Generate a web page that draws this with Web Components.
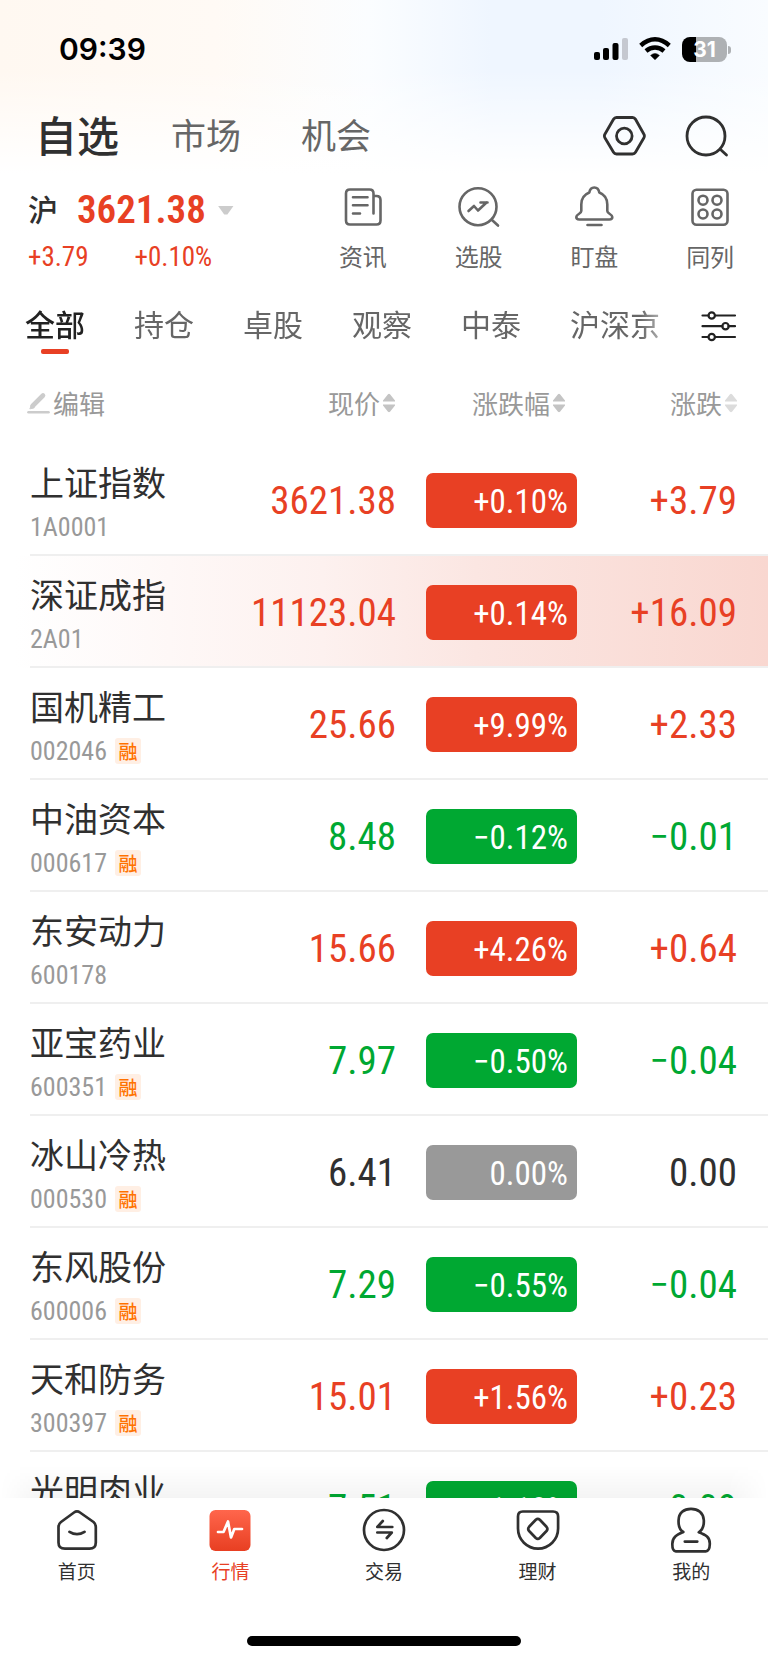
<!DOCTYPE html>
<html lang="zh-CN">
<head>
<meta charset="utf-8">
<meta name="viewport" content="width=device-width, initial-scale=1">
<title>自选行情</title>
<style>
  html, body { margin: 0; height: 100%; }
  body {
    --cjk: "Noto Sans CJK SC", sans-serif;
    --num: "Roboto Condensed", Roboto, "Noto Sans CJK SC", sans-serif;
    --up: #e84024;
    --down: #00a832;
    --flat: #303030;
    font-family: var(--cjk);
    color: #303030;
    background: #fff;
  }
</style>
</head>
<body>
<quote-app></quote-app>
<script>
const RESET = `
  *, *::before, *::after { box-sizing: border-box; }
  button { font: inherit; color: inherit; background: none; border: 0; padding: 0; margin: 0; cursor: pointer; }
  a { color: inherit; text-decoration: none; }
  svg { display: block; fill: none; stroke: currentColor; stroke-linecap: round; stroke-linejoin: round; }
`;

function define(name, html) {
  customElements.define(name, class extends HTMLElement {
    constructor() {
      super();
      this.attachShadow({ mode: 'open' }).innerHTML = `<style>${RESET}</style>` + html;
    }
  });
}

/* ---------- status bar ---------- */
define('status-bar', `
<style>
  :host { display: flex; justify-content: space-between; align-items: center; height: 98px; padding: 0 37px 0 59px; color: #000; }
  time { font: 600 30px/36px Inter, sans-serif; }
  .right { display: flex; align-items: center; gap: 11px; }
  .battery { position: relative; width: 45px; height: 25px; border-radius: 8px; margin-right: 4px;
    background: linear-gradient(90deg, #000 32%, #aeb1b4 32%); color: #fff; text-align: center; font: 700 21px/25px Inter, sans-serif; }
  .battery::after { content: ""; position: absolute; left: 46px; top: 9px; width: 3px; height: 8px; border-radius: 0 4px 4px 0; background: #aeb1b4; }
</style>
<time>09:39</time>
<div class="right">
  <svg width="34" height="24" viewBox="0 0 34 24" aria-hidden="true" style="stroke:none">
    <rect x="0" y="15" width="6" height="8" rx="2" fill="#000"/><rect x="9" y="11" width="6" height="12" rx="2" fill="#000"/>
    <rect x="18.500" y="6" width="6" height="17" rx="2" fill="#000"/><rect x="28" y="1" width="6" height="22" rx="2" fill="#c5c8d0"/>
  </svg>
  <svg width="32" height="24" viewBox="0 0 32 24" aria-hidden="true" style="stroke-width:4.4;stroke-linecap:butt">
    <path d="M1.700 8.500 Q8.500 2.300 16 2.300 T30.300 8.500"/><path d="M7 14 Q11 10.500 16 10.500 T25 14"/>
    <path d="M16 22.800 L11.600 18.400 Q16 14.600 20.400 18.400 Z" style="fill:#000;stroke-width:.5"/>
  </svg>
  <div class="battery">31</div>
</div>`);

/* ---------- top navigation ---------- */
define('top-nav', `
<style>
  :host { display: flex; justify-content: space-between; align-items: center; height: 76px; padding: 0 39px 0 35px; }
  nav { display: flex; align-items: center; gap: 52px; padding-bottom: 4px; }
  nav a { font-size: 35px; line-height: 52px; color: #666; }
  nav a[aria-current] { font-size: 42px; font-weight: 500; color: #303030; }
  nav a + a + a { margin-left: 8px; }
  .tools { display: flex; gap: 39px; }
  svg { stroke-width: 2.800; }
</style>
<nav><a href="#self" aria-current="page">自选</a><a href="#market">市场</a><a href="#chance">机会</a></nav>
<div class="tools">
  <button aria-label="设置"><svg width="44" height="44" viewBox="602 114 44 44">
    <path d="M616.500 117.500H632.500Q634.500 117.500 635.500 119.300L643.800 134Q645 136 643.800 138L635.500 152.300Q634.500 154 632.500 154H616.500Q614.500 154 613.500 152.300L605 138Q603.800 136 605 134L613.500 119.300Q614.500 117.500 616.500 117.500Z"/><circle cx="624.300" cy="136" r="7.800"/></svg></button>
  <button aria-label="搜索"><svg width="44" height="44" viewBox="685 114 44 44">
    <circle cx="706" cy="136" r="19"/><path d="M720.500 149.500L726.500 155"/></svg></button>
</div>`);

/* ---------- index summary and quick tools ---------- */
define('index-summary', `
<style>
  :host { display: block; color: var(--up); font-family: var(--num); padding: 13px 0 0 28px; }
  .line { display: flex; align-items: center; height: 46px; width: 100%; }
  .name { font: 500 30px/44px var(--cjk); color: #303030; margin-right: 19px; padding-bottom: 4px; }
  .value { font-size: 39px; font-weight: 600; }
  .arrow { width: 16px; height: 9px; margin-left: 12px; background: #ccc; clip-path: polygon(0 0, 100% 0, 60% 100%, 40% 100%); }
  .sub { display: flex; gap: 46px; font-size: 27px; line-height: 34px; padding-top: 7px; }
</style>
<button class="line"><span class="name">沪</span><span class="value">3621.38</span><span class="arrow"></span></button>
<div class="sub"><span>+3.79</span><span>+0.10%</span></div>`);

define('quick-tool', `
<style>
  :host { display: block; flex: 1; }
  a { display: flex; flex-direction: column; align-items: center; color: #666; font-size: 24px; line-height: 36px; gap: 10px; padding-top: 12px; }
</style>
<a href="#tool"><slot name="icon"></slot><slot></slot></a>`);

define('summary-panel', `
<style>
  :host { display: flex; height: 112px; }
  index-summary { flex: 1; }
  .tools { display: flex; width: 463px; }
  svg { stroke-width: 2.600; }
</style>
<index-summary></index-summary>
<div class="tools">
  <quick-tool><svg slot="icon" width="42" height="42" viewBox="342 186 42 42">
    <path d="M373.500 213.500V193.500q0-4-4-4H350q-4 0-4 4V220.500q0 4 4 4H376.500q4 0 4-4V200q0-4-4-4H373.500M353 197.300h14.500M353 205.200h14.500M353 213.500h7"/></svg>资讯</quick-tool>
  <quick-tool><svg slot="icon" width="42" height="42" viewBox="458 186 42 42">
    <circle cx="478" cy="206.700" r="18.500"/><path d="M492 220L498 225.500M468.500 211L474 206L478 210.500L486.500 202.500M480.500 202.500H487.500"/></svg>选股</quick-tool>
  <quick-tool><svg slot="icon" width="42" height="42" viewBox="573 186 42 42">
    <path d="M594.300 187.500c3 0 4.500 2 5 5c5 2 8 6 8 12v6.500c0 3 5 3 5 6q0 2.500-3 2.500H579.300q-3 0-3-2.500c0-3 5-3 5-6v-6.500c0-6 3-10 8-12c.5-3 2-5 5-5zM587.500 225h14"/></svg>盯盘</quick-tool>
  <quick-tool><svg slot="icon" width="42" height="42" viewBox="689 186 42 42">
    <rect x="692.500" y="189.800" width="35" height="35" rx="4"/><circle cx="703" cy="200.200" r="4.500"/><circle cx="717" cy="200.200" r="4.500"/><circle cx="703" cy="214" r="4.500"/><circle cx="717" cy="214" r="4.500"/></svg>同列</quick-tool>
</div>`);

/* ---------- watch-list groups ---------- */
define('group-tabs', `
<style>
  :host { display: flex; justify-content: space-between; align-items: center; height: 80px; padding: 0 31px 0 25px; }
  nav { display: flex; gap: 49px; font-size: 30px; line-height: 44px; color: #666; white-space: nowrap;
    -webkit-mask-image: linear-gradient(90deg, #000 calc(100% - 20px), #0008); mask-image: linear-gradient(90deg, #000 calc(100% - 20px), #0008); padding: 6px 0 12px; }
  [aria-current] { position: relative; font-weight: 500; color: #222; }
  [aria-current]::after { content: ""; position: absolute; left: 16px; bottom: -9px; width: 28px; height: 5px; border-radius: 2px; background: var(--up); }
  svg { stroke-width: 2.200; color: #222; }
</style>
<nav><a href="#all" aria-current="page">全部</a><a href="#hold">持仓</a><a href="#zg">卓股</a><a href="#gc">观察</a><a href="#zt">中泰</a><a href="#hsj">沪深京</a></nav>
<button aria-label="筛选"><svg width="36" height="32" viewBox="701 309 36 32">
  <path d="M702.500 314.500h6M715 314.500h20M702.500 325.200h20M728.500 325.200h6.500M702.500 336h6M715 336h20"/>
  <circle cx="711.700" cy="314.500" r="3.200"/><circle cx="725.500" cy="325.200" r="3.200"/><circle cx="711.700" cy="336" r="3.200"/></svg></button>`);

/* ---------- table parts ---------- */
define('sort-button', `
<style>
  :host { display: inline-block; color: #999; --mark: #c4c4c4; }
  :host([faint]) { --mark: #dcdcdc; }
  button { display: flex; align-items: center; gap: 3px; font-size: 26px; line-height: 38px; }
  svg { fill: var(--mark); stroke: none; }
</style>
<button><slot></slot><svg width="12" height="20" viewBox="0 0 12 20" aria-hidden="true">
  <path d="M0 7.500L5 1.200Q6 .4 7 1.200L12 7.500V8.500H0ZM0 11.500H12V12.500L7 18.800Q6 19.600 5 18.800L0 12.500Z"/></svg></button>`);

define('stock-name', `
<style>
  :host { display: block; font-weight: 400; }
  .name { display: block; font-size: 34px; line-height: 48px; color: #303030; }
  .meta { display: flex; align-items: center; gap: 8px; height: 26px; margin: 8px 0 2px; font: 26px/26px var(--num); color: #999; }
</style>
<span class="name"><slot></slot></span><span class="meta"><slot name="code"></slot><slot name="tag"></slot></span>`);

define('margin-tag', `
<style>
  :host { display: inline-block; width: 26px; height: 26px; border-radius: 3px; background: #ffefe4; color: #ff7200;
    font: 500 19px/25px var(--cjk); text-align: center; }
</style><slot></slot>`);

define('change-pill', `
<style>
  :host { display: block; width: 151px; height: 55px; margin-left: auto; padding: 1px 9px 0 0; border-radius: 7px;
    background: #999; color: #fff; font: 33px/55px var(--num); text-align: right; box-sizing: border-box; }
  :host([trend="up"]) { background: var(--up); }
  :host([trend="down"]) { background: var(--down); }
</style><slot></slot>`);

const STOCKS = [
  ['上证指数', '1A0001', 0, '3621.38', '+0.10%', '+3.79', 'up'],
  ['深证成指', '2A01', 0, '11123.04', '+0.14%', '+16.09', 'up'],
  ['国机精工', '002046', 1, '25.66', '+9.99%', '+2.33', 'up'],
  ['中油资本', '000617', 1, '8.48', '−0.12%', '−0.01', 'down'],
  ['东安动力', '600178', 0, '15.66', '+4.26%', '+0.64', 'up'],
  ['亚宝药业', '600351', 1, '7.97', '−0.50%', '−0.04', 'down'],
  ['冰山冷热', '000530', 1, '6.41', '0.00%', '0.00', 'flat'],
  ['东风股份', '600006', 1, '7.29', '−0.55%', '−0.04', 'down'],
  ['天和防务', '300397', 1, '15.01', '+1.56%', '+0.23', 'up'],
  ['光明肉业', '', 0, '7.51', '−1.18%', '−0.09', 'down'],
];

customElements.define('stock-table', class extends HTMLElement {
  constructor() {
    super();
    const rows = STOCKS.map(([name, code, margin, price, pct, chg, trend], i) => `
      <tr class="${trend}${i === 1 ? ' flash' : ''}">
        <th scope="row"><stock-name>${name}${code ? `<span slot="code">${code}</span>` : ''}${margin ? '<margin-tag slot="tag">融</margin-tag>' : ''}</stock-name></th>
        <td>${price}</td><td class="pct"><change-pill trend="${trend}">${pct}</change-pill></td><td class="last">${chg}</td>
      </tr>`).join('');
    this.attachShadow({ mode: 'open' }).innerHTML = `<style>${RESET}
      :host { display: block; }
      table { width: 100%; table-layout: fixed; border-spacing: 0; }
      .c-price { width: 192px; } .c-pct { width: 179px; } .c-chg { width: 191px; }
      th, td { padding: 0; font-weight: 400; text-align: right; }
      th:first-child { text-align: left; padding-left: 30px; }
      thead th { height: 78px; padding-bottom: 4px; }
      thead th:first-child { padding-left: 27px; }
      thead .price { padding-right: 3px; } thead .pct { padding-right: 12px; }
      .last { padding-right: 31px; }
      .edit { display: flex; align-items: center; gap: 3px; font-size: 26px; line-height: 38px; color: #999; }
      .edit svg { color: #ccc; }
      tbody tr { height: 112px; background: linear-gradient(#efefef, #efefef) 30px 100% / 100% 2px no-repeat; }
      tbody .flash { background: linear-gradient(#efefef, #efefef) 30px 100% / 100% 2px no-repeat,
        linear-gradient(90deg, #fff 2%, #fdf1ef 42%, #fbe6e2 62%, #f9d7d0); }
      tbody td { font: 39px/56px var(--num); }
      tbody td:not(.pct) { padding-top: 2px; }
      tbody td:nth-child(2) { padding-right: 2px; }
      .up { color: var(--up); } .down { color: var(--down); } .flat { color: var(--flat); }
    </style>
    <table>
      <colgroup><col><col class="c-price"><col class="c-pct"><col class="c-chg"></colgroup>
      <thead><tr>
        <th scope="col"><button class="edit"><svg width="23" height="24" viewBox="27 392 23 24" aria-hidden="true">
          <path d="M32.500 407L43 396.500" stroke-width="4.600"/><path d="M30 409.500L31.500 406L34 408.500Z" stroke-width="1"/><path d="M28.500 413.300H48.500" stroke-width="2.600"/></svg>编辑</button></th>
        <th scope="col" class="price"><sort-button>现价</sort-button></th>
        <th scope="col" class="pct"><sort-button>涨跌幅</sort-button></th>
        <th scope="col" class="last"><sort-button faint>涨跌</sort-button></th>
      </tr></thead>
      <tbody>${rows}</tbody>
    </table>`;
  }
});

/* ---------- bottom tab bar ---------- */
define('tab-item', `
<style>
  :host { display: block; flex: 1; color: #303030; }
  :host([active]) { color: var(--up); }
  a { display: flex; flex-direction: column; align-items: center; gap: 4px; font-size: 19px; line-height: 28px; padding-top: 9px; }
</style>
<a href="#tab"><slot name="icon"></slot><slot></slot></a>`);

define('tab-bar', `
<style>
  :host { display: flex; flex-direction: column; justify-content: space-between; position: relative; height: 165px; padding-bottom: 17px; background: #fff; }
  :host::before { content: ""; position: absolute; left: 0; right: 0; bottom: 100%; height: 32px; pointer-events: none;
    background: linear-gradient(#0000, #0000000b); -webkit-mask-image: linear-gradient(90deg, #0000, #000 40px, #000 calc(100% - 40px), #0000); mask-image: linear-gradient(90deg, #0000, #000 40px, #000 calc(100% - 40px), #0000); }
  nav { display: flex; }
  svg { stroke-width: 2.700; }
  .home { width: 274px; height: 10px; border-radius: 5px; background: #000; align-self: center; }
</style>
<nav>
  <tab-item><svg slot="icon" width="44" height="46" viewBox="55 1507 44 46">
    <path d="M80 1512.500L93.500 1522Q95.800 1524 95.800 1527V1542.500Q95.800 1548.700 89.500 1548.700H65Q58.500 1548.700 58.500 1542.500V1527Q58.500 1524 61 1522L74 1512.500Q77 1510.300 80 1512.500ZM69.500 1531.800Q77 1536.500 84.500 1531.800"/></svg>首页</tab-item>
  <tab-item active><svg slot="icon" width="44" height="46" viewBox="208.500 1507 44 46">
    <defs><linearGradient id="g" x2="0" y2="1"><stop stop-color="#ff664c"/><stop offset="1" stop-color="#e83f22"/></linearGradient></defs>
    <rect x="210" y="1510" width="41" height="41" rx="6" fill="url(#g)" stroke="none"/>
    <path d="M218.500 1532H224L228.500 1521.500L231.500 1537.500L234.800 1529H242.500" stroke="#fff"/></svg>行情</tab-item>
  <tab-item><svg slot="icon" width="44" height="46" viewBox="361.700 1507 44 46">
    <circle cx="383.700" cy="1530" r="20"/><path d="M392 1527H377L382.500 1521M377 1532.500H391.500L386.500 1538"/></svg>交易</tab-item>
  <tab-item><svg slot="icon" width="44" height="46" viewBox="515.700 1507 44 46">
    <path d="M522.500 1511.500H552.800Q557.800 1511.500 557.800 1516.500V1528.500A20 20 0 0 1 517.700 1528.500V1516.500Q517.700 1511.500 522.500 1511.500Z"/>
    <path d="M539.500 1519.800L546.200 1526.800Q548 1528.900 546.200 1531L539.500 1538Q537.500 1539.800 535.500 1538L528.800 1531Q527 1528.900 528.800 1526.800L535.500 1519.800Q537.500 1518 539.500 1519.800Z"/></svg>理财</tab-item>
  <tab-item><svg slot="icon" width="44" height="46" viewBox="669.200 1507 44 46">
    <path d="M683.500 1532C680 1530 678.500 1525 678.800 1520C679 1513 684 1508.800 691.200 1508.800S703.500 1513 704 1520C704.300 1525 702.500 1530 699 1532.300C706 1535 710.200 1537 710 1544Q709.800 1551.300 706 1551.300H676Q672.500 1551.300 672.500 1544C672.500 1537 677 1535 683.500 1532M685 1541.600H697.500"/></svg>我的</tab-item>
</nav>
<div class="home"></div>`);

/* ---------- page ---------- */
define('quote-app', `
<style>
  :host { display: flex; flex-direction: column; height: 100vh; min-height: 600px; }
  header { background:
    linear-gradient(#fff0 40%, #fff),
    linear-gradient(90deg, #fff8f1, #fffaf5 28%, #fbfdff 48%, #eff6ff 64%, #eff6ff 78%, #f9fcff); }
  main { flex: 1; min-height: 0; overflow: hidden; }
</style>
<header><status-bar></status-bar><top-nav></top-nav></header>
<summary-panel></summary-panel>
<group-tabs></group-tabs>
<main><stock-table></stock-table></main>
<tab-bar></tab-bar>`);
</script>
</body>
</html>
